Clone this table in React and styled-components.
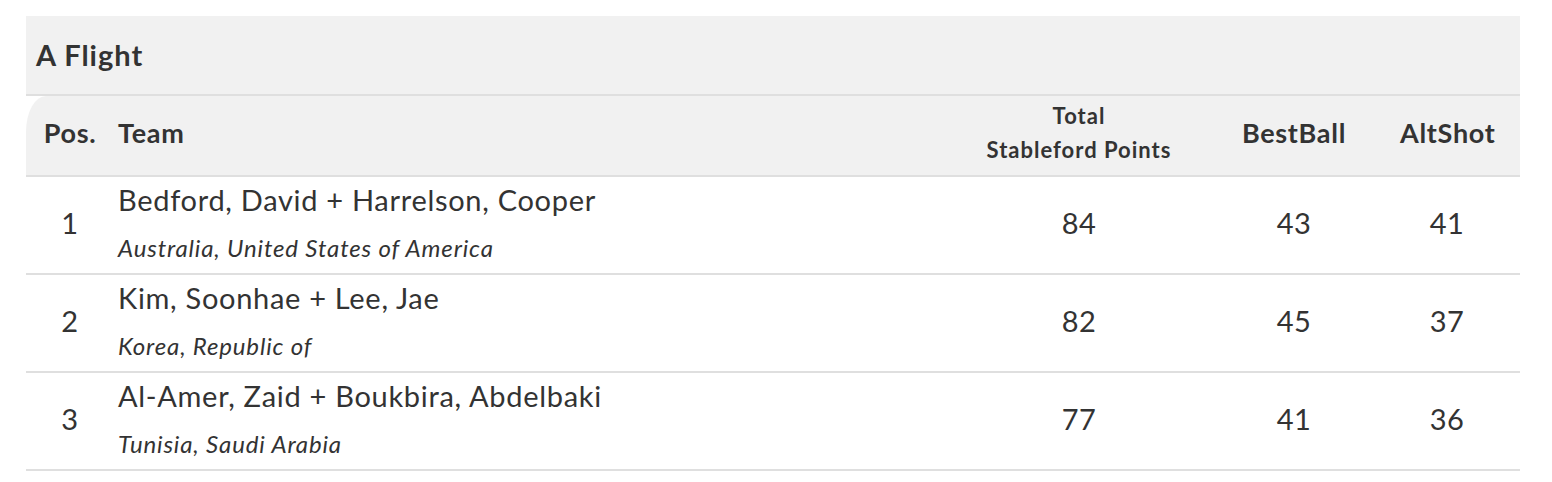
import React from "react";
import styled, { createGlobalStyle } from "styled-components";

const Global = createGlobalStyle`
  html, body { margin: 0; padding: 0; background: #fff; }
  body { font-family: Lato, "Open Sans", sans-serif; color: #333; }
`;

const Wrap = styled.div`
  padding: 16px 32px 0 26px;
`;

const Title = styled.div`
  background: #f1f1f1;
  height: 78px;
  display: flex;
  align-items: center;
  padding-left: 10px;
  padding-bottom: 2px;
  box-sizing: border-box;
  font-size: 29px;
  letter-spacing: 1px;
  font-weight: 700;
  color: #333;
  border-bottom: 2px solid #dfdfdf;
  height: 80px;
`;

const Table = styled.table`
  width: 100%;
  border-collapse: collapse;
  table-layout: fixed;
`;

const HeadRow = styled.tr`
  height: 80px;
  border-bottom: 2px solid #dfdfdf;
`;

const Th = styled.th`
  background: #f1f1f1;
  font-size: ${(p) => (p.$small ? "22px" : "27px")};
  letter-spacing: ${(p) => (p.$small ? "1px" : "0.7px")};
  line-height: ${(p) => (p.$small ? "34px" : "30px")};
  font-weight: 700;
  color: #333;
  text-align: ${(p) => p.$align || "center"};
  padding: 0 0 5px;
  padding-left: ${(p) => p.$pl || "0"};
  padding-right: ${(p) => p.$pr || "0"};
  vertical-align: middle;
  &:first-child {
    border-top-left-radius: 20px 36px;
  }
`;

const Row = styled.tr`
  border-bottom: 2px solid #dfdfdf;
`;

const Td = styled.td`
  text-align: ${(p) => p.$align || "center"};
  padding: ${(p) => (p.$team ? "4px 0 6px" : "0 0 5px")};
  padding-left: ${(p) => p.$pl || "0"};
  padding-right: ${(p) => p.$pr || "0"};
  font-size: 29px;
  letter-spacing: 0.5px;
  color: #333;
  vertical-align: middle;
`;

const Name = styled.div`
  font-size: 29px;
  letter-spacing: 0.7px;
  line-height: 38px;
`;

const Country = styled.div`
  font-size: 24px;
  letter-spacing: 0.85px;
  line-height: 38px;
  margin-top: 10px;
  font-style: italic;
`;

const rows = [
  { pos: 1, name: "Bedford, David + Harrelson, Cooper", country: "Australia, United States of America", total: 84, bb: 43, alt: 41 },
  { pos: 2, name: "Kim, Soonhae + Lee, Jae", country: "Korea, Republic of", total: 82, bb: 45, alt: 37 },
  { pos: 3, name: "Al-Amer, Zaid + Boukbira, Abdelbaki", country: "Tunisia, Saudi Arabia", total: 77, bb: 41, alt: 36 },
];

export default function App() {
  return (
    <>
      <Global />
      <Wrap>
        <Title>A Flight</Title>
        <Table>
          <colgroup>
            <col style={{ width: 88 }} />
            <col />
            <col style={{ width: 218 }} />
            <col style={{ width: 212 }} />
            <col style={{ width: 120 }} />
          </colgroup>
          <thead>
            <HeadRow>
              <Th>Pos.</Th>
              <Th $align="left" $pl="4px">Team</Th>
              <Th $small>Total<br />Stableford Points</Th>
              <Th>BestBall</Th>
              <Th $pr="26px">AltShot</Th>
            </HeadRow>
          </thead>
          <tbody>
            {rows.map((r) => (
              <Row key={r.pos}>
                <Td>{r.pos}</Td>
                <Td $team $align="left" $pl="4px">
                  <Name>{r.name}</Name>
                  <Country>{r.country}</Country>
                </Td>
                <Td>{r.total}</Td>
                <Td>{r.bb}</Td>
                <Td $pr="26px">{r.alt}</Td>
              </Row>
            ))}
          </tbody>
        </Table>
      </Wrap>
    </>
  );
}
